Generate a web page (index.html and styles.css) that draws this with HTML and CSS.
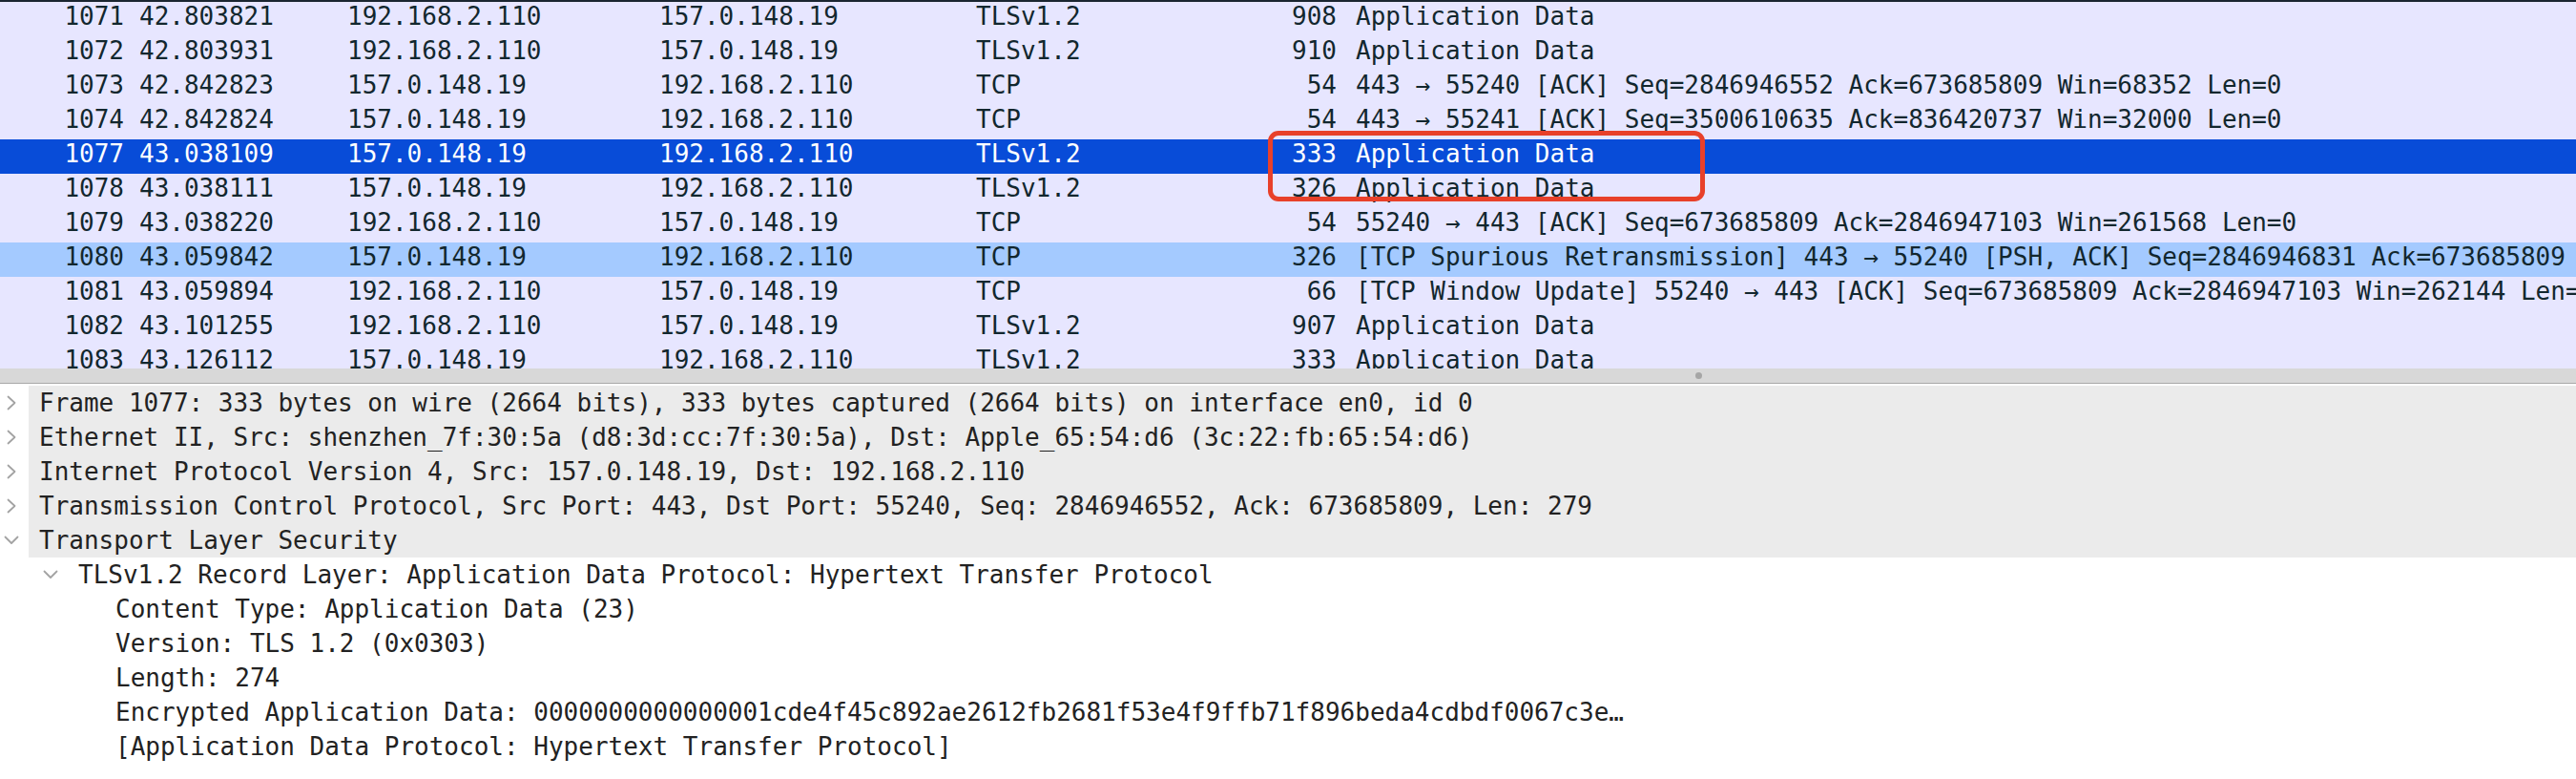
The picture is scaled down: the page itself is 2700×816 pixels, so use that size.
FILE: index.html
```html
<!DOCTYPE html>
<html>
<head>
<meta charset="utf-8">
<link rel="stylesheet" href="styles.css">
</head>
<body>
<div class="app">
  <div class="topbar"></div>
  <div class="list">
    <div class="row"><span class="no">1071</span><span class="time">42.803821</span><span class="src">192.168.2.110</span><span class="dst">157.0.148.19</span><span class="proto">TLSv1.2</span><span class="len">908</span><span class="info">Application Data</span></div>
    <div class="row"><span class="no">1072</span><span class="time">42.803931</span><span class="src">192.168.2.110</span><span class="dst">157.0.148.19</span><span class="proto">TLSv1.2</span><span class="len">910</span><span class="info">Application Data</span></div>
    <div class="row"><span class="no">1073</span><span class="time">42.842823</span><span class="src">157.0.148.19</span><span class="dst">192.168.2.110</span><span class="proto">TCP</span><span class="len">54</span><span class="info">443 → 55240 [ACK] Seq=2846946552 Ack=673685809 Win=68352 Len=0</span></div>
    <div class="row"><span class="no">1074</span><span class="time">42.842824</span><span class="src">157.0.148.19</span><span class="dst">192.168.2.110</span><span class="proto">TCP</span><span class="len">54</span><span class="info">443 → 55241 [ACK] Seq=3500610635 Ack=836420737 Win=32000 Len=0</span></div>
    <div class="row selected"><span class="no">1077</span><span class="time">43.038109</span><span class="src">157.0.148.19</span><span class="dst">192.168.2.110</span><span class="proto">TLSv1.2</span><span class="len">333</span><span class="info">Application Data</span></div>
    <div class="row"><span class="no">1078</span><span class="time">43.038111</span><span class="src">157.0.148.19</span><span class="dst">192.168.2.110</span><span class="proto">TLSv1.2</span><span class="len">326</span><span class="info">Application Data</span></div>
    <div class="row"><span class="no">1079</span><span class="time">43.038220</span><span class="src">192.168.2.110</span><span class="dst">157.0.148.19</span><span class="proto">TCP</span><span class="len">54</span><span class="info">55240 → 443 [ACK] Seq=673685809 Ack=2846947103 Win=261568 Len=0</span></div>
    <div class="row related"><span class="no">1080</span><span class="time">43.059842</span><span class="src">157.0.148.19</span><span class="dst">192.168.2.110</span><span class="proto">TCP</span><span class="len">326</span><span class="info">[TCP Spurious Retransmission] 443 → 55240 [PSH, ACK] Seq=2846946831 Ack=673685809 Win=68352 Len=272</span></div>
    <div class="row"><span class="no">1081</span><span class="time">43.059894</span><span class="src">192.168.2.110</span><span class="dst">157.0.148.19</span><span class="proto">TCP</span><span class="len">66</span><span class="info">[TCP Window Update] 55240 → 443 [ACK] Seq=673685809 Ack=2846947103 Win=262144 Len=0</span></div>
    <div class="row"><span class="no">1082</span><span class="time">43.101255</span><span class="src">192.168.2.110</span><span class="dst">157.0.148.19</span><span class="proto">TLSv1.2</span><span class="len">907</span><span class="info">Application Data</span></div>
    <div class="row"><span class="no">1083</span><span class="time">43.126112</span><span class="src">157.0.148.19</span><span class="dst">192.168.2.110</span><span class="proto">TLSv1.2</span><span class="len">333</span><span class="info">Application Data</span></div>
    <div class="redbox"></div>
  </div>
  <div class="splitter"><span class="grip"></span></div>
  <div class="details">
    <div class="drow top"><span class="tw"><svg class="chev-r" viewBox="0 0 12 16" width="12" height="16"><path d="M2.5 1.5 L9.5 8 L2.5 14.5"/></svg></span><span class="lbl">Frame 1077: 333 bytes on wire (2664 bits), 333 bytes captured (2664 bits) on interface en0, id 0</span></div>
    <div class="drow top"><span class="tw"><svg class="chev-r" viewBox="0 0 12 16" width="12" height="16"><path d="M2.5 1.5 L9.5 8 L2.5 14.5"/></svg></span><span class="lbl">Ethernet II, Src: shenzhen_7f:30:5a (d8:3d:cc:7f:30:5a), Dst: Apple_65:54:d6 (3c:22:fb:65:54:d6)</span></div>
    <div class="drow top"><span class="tw"><svg class="chev-r" viewBox="0 0 12 16" width="12" height="16"><path d="M2.5 1.5 L9.5 8 L2.5 14.5"/></svg></span><span class="lbl">Internet Protocol Version 4, Src: 157.0.148.19, Dst: 192.168.2.110</span></div>
    <div class="drow top"><span class="tw"><svg class="chev-r" viewBox="0 0 12 16" width="12" height="16"><path d="M2.5 1.5 L9.5 8 L2.5 14.5"/></svg></span><span class="lbl">Transmission Control Protocol, Src Port: 443, Dst Port: 55240, Seq: 2846946552, Ack: 673685809, Len: 279</span></div>
    <div class="drow top"><span class="tw"><svg class="chev-d" viewBox="0 0 16 10" width="16" height="10"><path d="M1.5 1.5 L8 8 L14.5 1.5"/></svg></span><span class="lbl">Transport Layer Security</span></div>
    <div class="drow d1"><span class="tw"><svg class="chev-d" viewBox="0 0 16 10" width="16" height="10"><path d="M1.5 1.5 L8 8 L14.5 1.5"/></svg></span><span class="lbl">TLSv1.2 Record Layer: Application Data Protocol: Hypertext Transfer Protocol</span></div>
    <div class="drow d2"><span class="tw"></span><span class="lbl">Content Type: Application Data (23)</span></div>
    <div class="drow d2"><span class="tw"></span><span class="lbl">Version: TLS 1.2 (0x0303)</span></div>
    <div class="drow d2"><span class="tw"></span><span class="lbl">Length: 274</span></div>
    <div class="drow d2"><span class="tw"></span><span class="lbl">Encrypted Application Data: 0000000000000001cde4f45c892ae2612fb2681f53e4f9ffb71f896beda4cdbdf0067c3e…</span></div>
    <div class="drow d2"><span class="tw"></span><span class="lbl">[Application Data Protocol: Hypertext Transfer Protocol]</span></div>
  </div>
</div>
</body>
</html>
```
FILE: styles.css
```css
html, body {
  margin: 0;
  padding: 0;
  background: #ffffff;
}
body {
  width: 2700px;
  height: 816px;
  overflow: hidden;
  font-family: "DejaVu Sans Mono", "Liberation Mono", monospace;
  font-size: 26px;
}
.app {
  display: flex;
  flex-direction: column;
  width: 2700px;
  height: 816px;
}
.topbar {
  height: 2px;
  background: #1a2530;
  flex: none;
}
.list {
  position: relative;
  height: 384px;
  flex: none;
  overflow: hidden;
  background: #e7e6ff;
  color: #12272e;
}
.row {
  display: grid;
  grid-template-columns: 130px 234px 327px 332px 277px 101px minmax(0, 1fr);
  height: 36px;
  line-height: 31px;
  white-space: nowrap;
  background: #e7e6ff;
}
.row.selected {
  background: #084cd8;
  color: #ffffff;
}
.row.related {
  background: #a4caff;
}
.no, .len {
  text-align: right;
}
.time {
  padding-left: 16px;
}
.info {
  padding-left: 20px;
  overflow: hidden;
}
.redbox {
  position: absolute;
  left: 1329px;
  top: 135px;
  width: 458px;
  height: 74px;
  box-sizing: border-box;
  border: 5px solid #e8402a;
  border-radius: 11px;
}
.splitter {
  flex: none;
  height: 15px;
  background: #d8d8d8;
  border-bottom: 1px solid #a8a8a8;
  display: flex;
  align-items: center;
  padding-left: 1777px;
}
.grip {
  width: 7px;
  height: 7px;
  border-radius: 50%;
  background: #a6a6a6;
}
.details {
  flex: 1;
  padding-top: 2px;
  background: #ffffff;
  color: #222222;
}
.drow {
  display: flex;
  height: 36px;
  line-height: 36px;
  white-space: nowrap;
}
.tw {
  flex: none;
  width: 30px;
  display: flex;
  align-items: center;
  padding-left: 4px;
  box-sizing: border-box;
}
.lbl {
  flex: 1;
  min-width: 0;
  padding-left: 11px;
  overflow: hidden;
}
.top .lbl {
  background: #ebebeb;
}
.d1 {
  padding-left: 41px;
}
.d2 {
  padding-left: 80px;
}
.tw svg path {
  fill: none;
  stroke: #a3a3a3;
  stroke-width: 1.8;
  stroke-linecap: round;
  stroke-linejoin: round;
}
.chev-r {
  margin-left: 2px;
}
```
